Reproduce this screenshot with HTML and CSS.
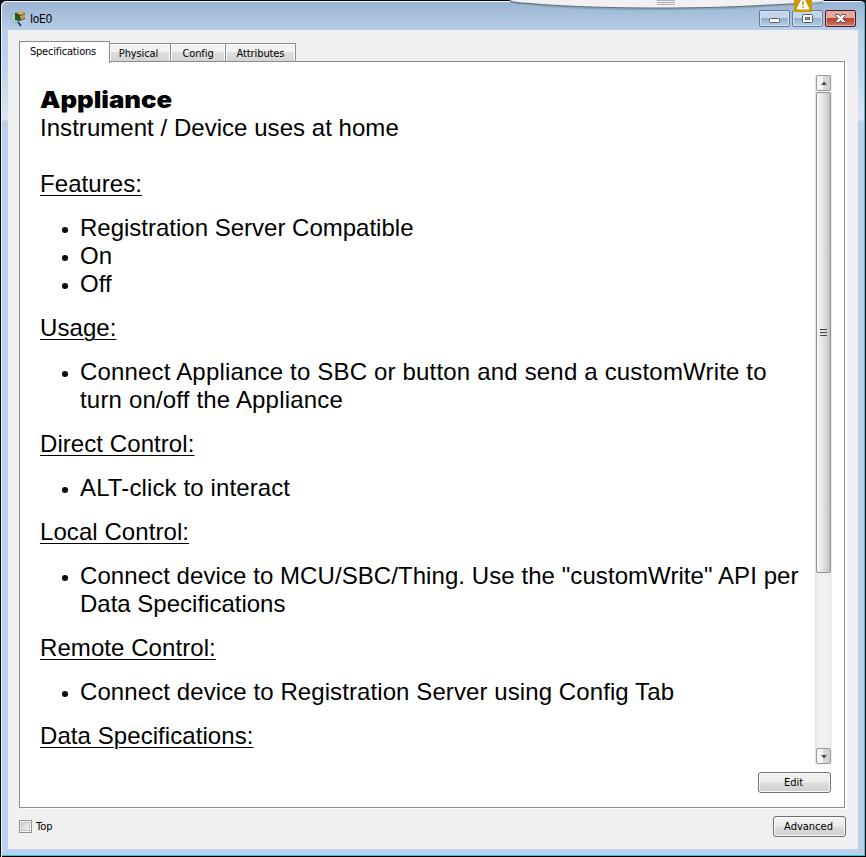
FILE: index.html
```html
<!DOCTYPE html>
<html lang="en">
<head>
<meta charset="utf-8">
<title>IoE0</title>
<link rel="stylesheet" href="styles.css">
</head>
<body>
<div class="window">
  <header class="titlebar">
    <svg class="app-icon" width="16" height="17" viewBox="0 0 16 17">
      <circle cx="5" cy="8.500" r="4.500" fill="#b7c5cc" stroke="#9daab3"/>
      <path d="M5 3l5-1 5 1v6l-5 2-5-2z" fill="#4b4520"/>
      <path d="M6 3l4-1 5 1-4 2z" fill="#e4b956"/><path d="M10 6l5-2v4l-4 2z" fill="#c69c3e"/>
      <path d="M5 4l4 2v5l-4-1z" fill="#126326"/>
      <path d="M8 12l3 4" stroke="#222b33" stroke-width="1.500"/>
    </svg>
    <span class="title">IoE0</span>
    <div class="controls">
      <div class="control"><svg width="29" height="15"><rect x="9.500" y="7.500" width="10" height="4" rx="1" fill="#fff" stroke="#535a6c"/></svg></div>
      <div class="control"><svg width="29" height="15"><rect x="9.500" y="3.500" width="10" height="8" rx="1" fill="#fff" stroke="#535a6c"/><rect x="12.500" y="6.500" width="4" height="2" fill="#9bb6d3" stroke="#535a6c"/></svg></div>
      <div class="control close"><svg width="29" height="15"><path d="M9.500 3.500h3.500l1.500 2 1.500-2h3.500v1l-2.700 3 2.700 3v1H16l-1.500-2-1.500 2H9.500v-1l2.700-3-2.700-3z" fill="#fff" stroke="#535666"/></svg></div>
    </div>
  </header>
  <main class="client">
    <nav class="tabs">
      <div class="tab active">Specifications</div>
      <div class="tab physical">Physical</div>
      <div class="tab config">Config</div>
      <div class="tab attributes">Attributes</div>
    </nav>
    <section class="panel">
      <div class="viewer">
        <article class="document">
          <h1>Appliance</h1>
          <p class="intro">Instrument / Device uses at home</p>
          <h2>Features:</h2>
          <ul><li>Registration Server Compatible</li><li>On</li><li>Off</li></ul>
          <h2>Usage:</h2>
          <ul class="usage"><li>Connect Appliance to SBC or button and send a customWrite to<br>turn on/off the Appliance</li></ul>
          <h2>Direct Control:</h2>
          <ul class="direct"><li>ALT-click to interact</li></ul>
          <h2>Local Control:</h2>
          <ul class="local"><li>Connect device to MCU/SBC/Thing. Use the "customWrite" API per<br><span class="plain">Data Specifications</span></li></ul>
          <h2>Remote Control:</h2>
          <ul class="remote"><li>Connect device to Registration Server using Config Tab</li></ul>
          <h2>Data Specifications:</h2>
        </article>
        <div class="scrollbar">
          <div class="arrow"><svg width="13" height="14"><path d="M4 9l3-3.500L10 9z" fill="#505050"/></svg></div>
          <div class="thumb"><i></i><i></i><i></i></div>
          <div class="arrow"><svg width="13" height="14"><path d="M4 6h6L7 9.500z" fill="#505050"/></svg></div>
        </div>
      </div>
      <div class="edit-row"><button class="button">Edit</button></div>
    </section>
    <footer class="footer">
      <label class="top"><span class="checkbox"></span>Top</label>
      <button class="button">Advanced</button>
    </footer>
  </main>
</div>
<svg class="dock" width="330" height="14" viewBox="0 0 330 14">
  <path d="M9 0H324Q323 3 302 3.500C250 7 210 8 160 8C100 8 58 6 29 3.500Q13 3 9 0z" fill="#f1f1f1"/>
  <path d="M10 1Q13 3 29 4C58 7 100 9 160 9S250 7 302 3.500Q318 3 323 2" fill="none" stroke="#6f8294" stroke-width="2.500" opacity=".4"/>
  <path d="M10 1Q13 3 29 3.500C58 6 100 8 160 8S250 6 302 3.500" fill="none" stroke="#50606d" opacity=".8"/>
  <path d="M157 .5h18M157 2.500h18M157 4.500h18" stroke="#b0b0b0"/>
  <path d="M294 0h18v11q0 1-1 1h-16q-1 0-1-1z" fill="#cc9800"/>
  <path d="M303-3l6 12h-12z" fill="#fff" stroke="#fff" stroke-linejoin="round"/>
  <path d="M303 1v4M303 6.500v1.500" stroke="#c69200" stroke-width="1.500"/>
</svg>
</body>
</html>
```
FILE: styles.css
```css
* { box-sizing: border-box; }
body { margin: 0; width: 866px; height: 857px; overflow: hidden; background: #15151b; color: #000; font-family: "DejaVu Sans Condensed", "Noto Sans", sans-serif; font-size: 11px; }
.window { height: 857px; border: 1px solid #08090d; border-right: 0; border-radius: 6px 6px 0 0; padding: 0 7px 6px 6px; background: linear-gradient(#99b3d2 0, #b8cfe8 30px, #bfd5ef 70px, #d8e7f8 119px, #b9d1ea 120px, #b9d1ea); box-shadow: inset 1px 1px #eff6fb, inset -1px -1px #000, inset -2px -2px #36c4dc; border-bottom: 0; }
.titlebar { height: 29px; display: flex; align-items: flex-start; padding: 9px 3px 0 3px; }
.title { font-size: 12px; line-height: 18px; margin-left: 4px; letter-spacing: -.4px; }
.controls { margin-left: auto; display: flex; gap: 2px; }
.control { width: 31px; height: 17px; border: 1px solid #65799a; border-radius: 2px; background: linear-gradient(#c3d5ea 0 48%, #94b0cf 50%, #b6cfe6); box-shadow: inset 0 0 0 1px #d2e0ef; }
.control svg, .arrow svg { display: block; }
.close { border-color: #4b1824; background: linear-gradient(#e5a79f 0 46%, #bd412b 50%, #cc7660); box-shadow: inset 0 0 0 1px #e5aaa1; }
.client { margin-left: 1px; width: 850px; height: 819px; background: #f0f0f0; padding: 11px 13px 0 11px; }
.tabs { display: flex; align-items: flex-end; height: 21px; }
.tab { height: 19px; border: 1px solid #898c95; border-left: 0; background: linear-gradient(#f2f2f2 0 48%, #dedede 50%, #d4d4d4); box-shadow: inset 1px 1px #fafafa, inset -1px 0 #fafafa; text-align: center; line-height: 19px; letter-spacing: -.1px; }
.tab.active { width: 91px; height: 21px; border-left: 1px solid #898c95; border-bottom: 0; background: #fff; line-height: 20px; padding-right: 3px; position: relative; margin-bottom: -1px; height: 22px; letter-spacing: -.18px; }
.physical { width: 61px; padding-right: 3px; }
.config { width: 55px; }
.attributes { width: 70px; }
.panel { margin-top: -1px; width: 826px; height: 747px; border: 1px solid #898c95; background: #fff; box-shadow: 2px 1px #fff; padding: 13px 12px 0 20px; }
.viewer { height: 690px; display: flex; overflow: hidden; }
.document { flex: 1; padding-top: 11px; font: 24px/28px "Liberation Sans", sans-serif; white-space: nowrap; }
h1 { margin: 0; width: max-content; font: 900 23px/28px Inter, sans-serif; transform: scaleX(1.12); transform-origin: left; }
h2 { margin: 0; font-size: 24px; font-weight: 400; letter-spacing: .07px; text-decoration: underline; text-decoration-thickness: 1px; text-underline-offset: 3px; }
.intro { margin: 0 0 28px; letter-spacing: .04px; }
ul { list-style: none; margin: 16px 0; padding: 0 0 0 40px; }
li::before { content: ""; float: left; width: 6px; height: 6px; border-radius: 50%; background: #000; margin: 13px 0 0 -18px; }
.usage { letter-spacing: .18px; }
.usage li { word-spacing: 0; }
.direct { letter-spacing: .12px; }
.local { letter-spacing: .07px; }
.plain { letter-spacing: 0; }
.remote { letter-spacing: .09px; }
.scrollbar { width: 17px; display: flex; flex-direction: column; background: linear-gradient(90deg, #e5e5e5, #f1f1f1 3px, #eee); padding: 0 1px; }
.arrow { width: 15px; height: 16px; border: 1px solid #999; border-radius: 2px; background: linear-gradient(90deg, #f5f5f5 0 48%, #d8d8db 50%, #d0d0d3); }
.arrow:last-child { margin: auto 0 1px; }
.thumb { height: 481px; margin-top: 1px; border: 1px solid #929297; border-radius: 2px; background: linear-gradient(90deg, #f7f7f7, #e5e5e8 40%, #cbcbd0 85%, #bbb); display: flex; flex-direction: column; align-items: center; justify-content: center; gap: 1px; }
.thumb i { width: 7px; height: 2px; background: linear-gradient(#444 50%, #ddd 50%); }
.edit-row { margin: 7px 1px 0 0; display: flex; justify-content: flex-end; }
.button { width: 73px; height: 21px; border: 1px solid #707070; border-radius: 3px; padding: 0 2px 0 0; background: linear-gradient(#f3f3f3 0, #ebebeb 49%, #ddd 51%, #cfcfcf); box-shadow: inset 0 0 0 1px #fbfbfb; font: 11px/19px "DejaVu Sans Condensed", sans-serif; color: #000; }
.footer { display: flex; justify-content: space-between; margin-top: 8px; width: 827px; }
.top { display: flex; align-items: center; height: 21px; gap: 4px; }
.checkbox { width: 13px; height: 13px; border: 1px solid #8e8f8f; background: linear-gradient(135deg, #cbcfd5, #f6f6f6); box-shadow: inset 0 0 0 1px #f4f4f4, inset 0 0 0 2px #c0c5cc; }
.dock { position: absolute; left: 500px; top: 0; }
```
